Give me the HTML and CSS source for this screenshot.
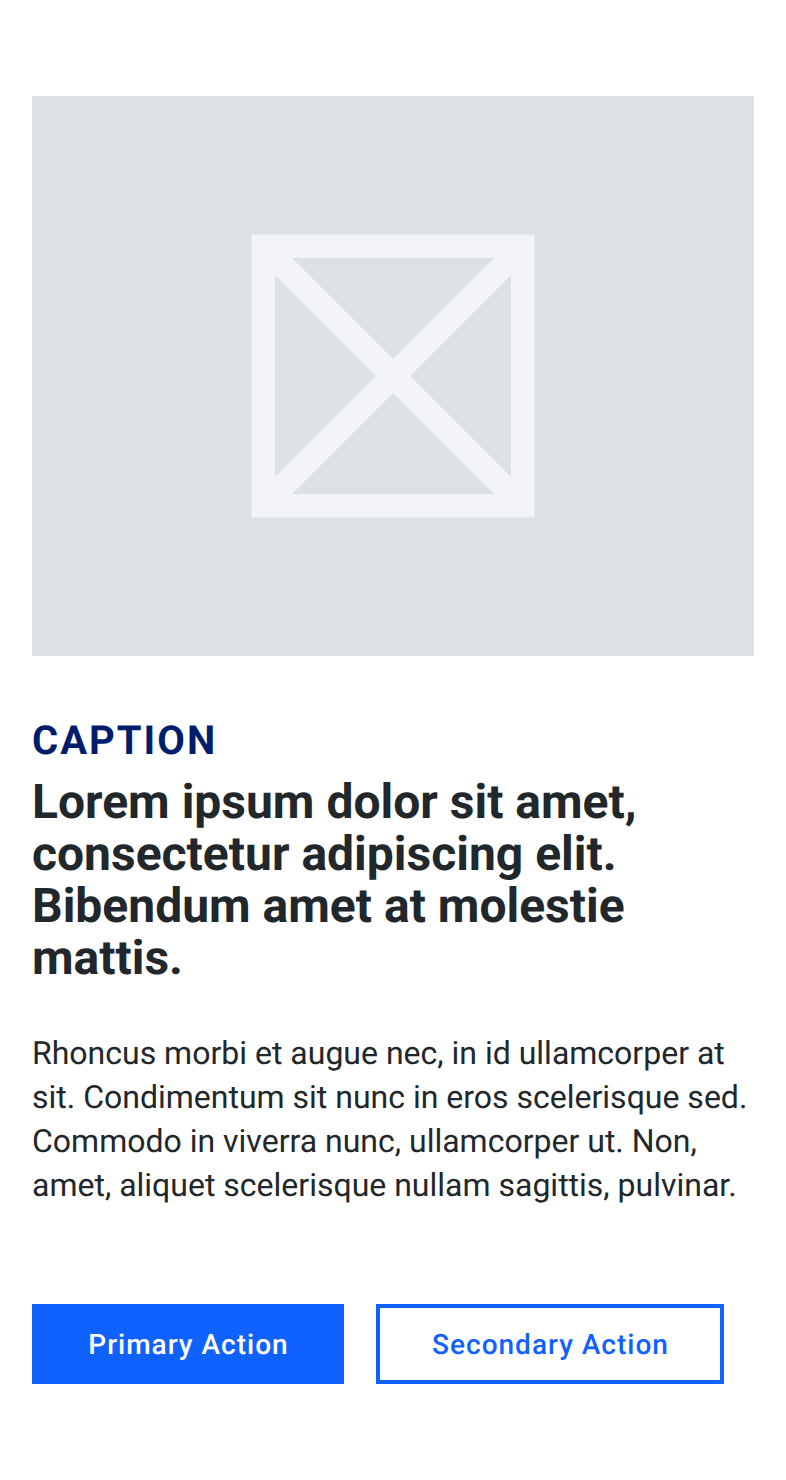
FILE: index.html
```html
<!DOCTYPE html>
<html lang="en">
<head>
<meta charset="utf-8">
<title>Content block</title>
<link rel="stylesheet" href="styles.css">
</head>
<body>
<main class="block">
  <div class="media">
    <svg class="placeholder" viewBox="0 0 284 284" aria-hidden="true">
      <path fill="#f2f4f8" fill-rule="evenodd" d="M.4 .4H283.6V283.6H.4Z M41 24L142 125L243 24Z M24 41V243L125 142Z M260 41L159 142L260 243Z M142 159L41 260H243Z"/>
    </svg>
  </div>
  <header class="heading">
    <p class="caption">CAPTION</p>
    <h1 class="title">Lorem ipsum dolor sit amet, consectetur adipiscing elit. Bibendum amet at molestie mattis.</h1>
  </header>
  <p class="copy">Rhoncus morbi et augue nec, in id ullamcorper at sit. Condimentum sit nunc in eros scelerisque sed. Commodo in viverra nunc, ullamcorper ut. Non, amet, aliquet scelerisque nullam sagittis, pulvinar.</p>
  <div class="actions">
    <button class="button primary">Primary Action</button>
    <button class="button secondary">Secondary Action</button>
  </div>
</main>
</body>
</html>
```
FILE: styles.css
```css
* { box-sizing: border-box; }
body { margin: 0; background: #fff; color: #21272a; font-family: Roboto, sans-serif; text-rendering: geometricPrecision; }
p, h1 { margin: 0; }
.block { display: flex; flex-direction: column; min-height: 1480px; padding: 96px 32px; }
.media { display: flex; align-items: center; justify-content: center; height: 560px; background: #dde1e6; }
.placeholder { width: 284px; height: 284px; }
.heading { display: flex; flex-direction: column; gap: 15px; margin-top: 65px; }
.caption { color: #001d6c; font-size: 40px; font-weight: 700; line-height: 40px; letter-spacing: 2px; }
.title { font-size: 48px; font-weight: 700; line-height: 52px; }
.copy { margin-top: 47px; font-size: 32px; line-height: 44px; }
.actions { display: flex; gap: 32px; margin-top: 97px; }
.button { height: 80px; padding: 2px 0 0 1px; border: 4px solid #0f62fe; border-radius: 0; font: 500 28px/28px Roboto, sans-serif; letter-spacing: 1px; text-rendering: geometricPrecision; }
.primary { width: 312px; background: #0f62fe; color: #fff; }
.secondary { width: 348px; background: #fff; color: #0f62fe; }
```
